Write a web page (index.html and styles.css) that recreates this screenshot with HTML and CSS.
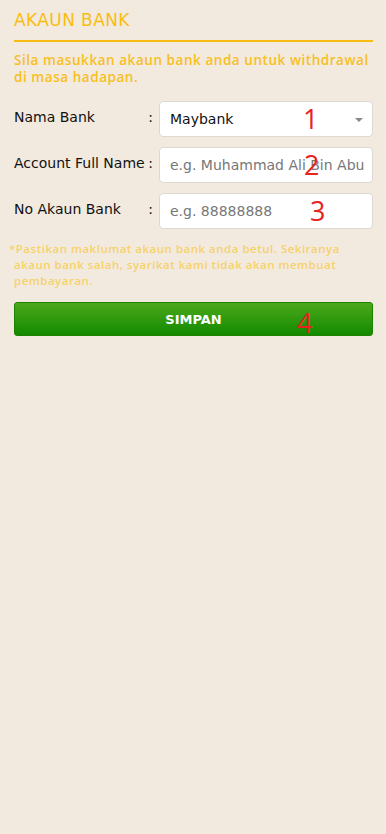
FILE: index.html
```html
<!DOCTYPE html>
<html lang="ms">
<head>
<meta charset="utf-8">
<title>Akaun Bank</title>
<link rel="stylesheet" href="styles.css">
</head>
<body>
<main class="page">
  <h1 class="title">AKAUN BANK</h1>
  <p class="intro">Sila masukkan akaun bank anda untuk withdrawal di masa hadapan.</p>
  <form class="form">
    <div class="row">
      <label class="label"><span>Nama Bank</span><span>:</span></label>
      <div class="field select">
        <span class="value">Maybank</span>
        <span class="caret"></span>
        <span class="mark mark-1">1</span>
      </div>
    </div>
    <div class="row">
      <label class="label"><span>Account Full Name</span><span>:</span></label>
      <div class="field">
        <span class="placeholder">e.g. Muhammad Ali Bin Abu</span>
        <span class="mark mark-2">2</span>
      </div>
    </div>
    <div class="row">
      <label class="label"><span>No Akaun Bank</span><span>:</span></label>
      <div class="field">
        <span class="placeholder">e.g. 88888888</span>
        <span class="mark mark-3">3</span>
      </div>
    </div>
    <p class="note">*Pastikan maklumat akaun bank anda betul. Sekiranya akaun bank salah, syarikat kami tidak akan membuat pembayaran.</p>
    <button type="button" class="btn">SIMPAN<span class="mark mark-4">4</span></button>
  </form>
</main>
</body>
</html>
```
FILE: styles.css
```css
html, body {
  margin: 0;
  padding: 0;
  background: #f2eadf;
  height: 100%;
}
body {
  font-family: "DejaVu Sans", sans-serif;
}
.page {
  padding: 10px 13px 0 14px;
}
.title {
  margin: 0;
  font-size: 17px;
  font-weight: 400;
  color: #f9bd12;
  line-height: 21px;
  padding-bottom: 9px;
  border-bottom: 2px solid #f9bd12;
  letter-spacing: 0.4px;
}
.intro {
  margin: 10px 0 0;
  font-family: "Open Sans", sans-serif;
  font-size: 13.5px;
  font-weight: 600;
  line-height: 17px;
  letter-spacing: 0.55px;
  color: #f8bf22;
}
.form {
  margin-top: 15px;
  display: flex;
  flex-direction: column;
}
.row {
  display: grid;
  grid-template-columns: 1fr 214px;
  column-gap: 4px;
  align-items: center;
  margin-bottom: 10px;
}
.label {
  display: flex;
  justify-content: space-between;
  font-size: 14px;
  letter-spacing: 0;
  color: #111;
  padding-right: 2px;
  margin-top: -4px;
}
.field {
  position: relative;
  height: 36px;
  box-sizing: border-box;
  background: #fff;
  border: 1px solid #dcd8d2;
  border-radius: 4px;
  display: flex;
  align-items: center;
  padding: 0 10px;
  font-size: 14px;
  white-space: nowrap;
  overflow: hidden;
}
.value { color: #111; }
.placeholder { color: #777; }
.caret {
  position: absolute;
  right: 9px;
  top: 16px;
  width: 0;
  height: 0;
  border-left: 4px solid transparent;
  border-right: 4px solid transparent;
  border-top: 4px solid #888;
}
.mark {
  position: absolute;
  color: #e8241f;
  font-family: "Open Sans", sans-serif;
  font-size: 27px;
  font-weight: 400;
  letter-spacing: 0;
  line-height: 1;
}
.mark-1 { left: 143px; top: 3px; }
.mark-2 { left: 144px; top: 3px; }
.mark-3 { left: 150px; top: 3px; }
.mark-4 { left: 282px; top: 6px; }
.note {
  margin: 2px 0 0 0;
  text-indent: -5px;
  font-family: "Open Sans", sans-serif;
  font-size: 11.5px;
  font-weight: 600;
  line-height: 16px;
  letter-spacing: 0.5px;
  color: #f6d26a;
}
.btn {
  position: relative;
  margin-top: 13px;
  height: 34px;
  border: 1px solid #1d8200;
  border-radius: 3px;
  background: linear-gradient(#4ca81b, #138a00);
  color: #fff;
  font-family: "DejaVu Sans", sans-serif;
  font-size: 13px;
  font-weight: 700;
  padding: 0;
  text-align: center;
}
```
